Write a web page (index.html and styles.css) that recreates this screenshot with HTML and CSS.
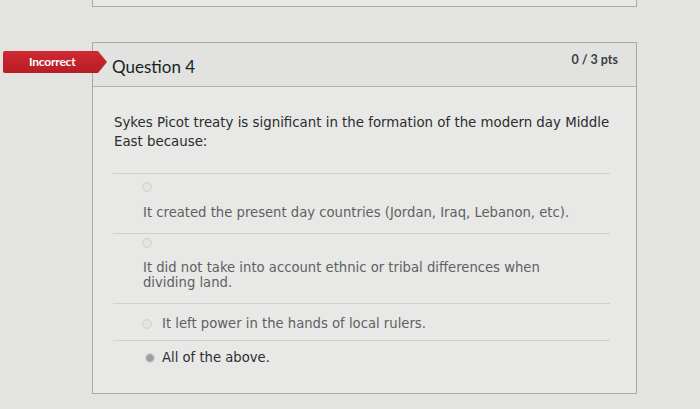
FILE: index.html
```html
<!DOCTYPE html>
<html>
<head>
<meta charset="utf-8">
<link rel="stylesheet" href="styles.css">
</head>
<body>
<div class="page">
  <div class="prev-card"></div>
  <div class="question">
    <div class="badge">Incorrect</div>
    <div class="q-header">
      <h2 class="q-title">Question 4</h2>
      <span class="q-pts">0 / 3 pts</span>
    </div>
    <div class="q-body">
      <p class="q-text">Sykes Picot treaty is significant in the formation of the modern day Middle East because:</p>
      <div class="answers">
        <div class="answer stacked">
          <span class="radio"></span>
          <div class="label">It created the present day countries (Jordan, Iraq, Lebanon, etc).</div>
        </div>
        <div class="answer stacked tight">
          <span class="radio"></span>
          <div class="label wrap">It did not take into account ethnic or tribal differences when dividing land.</div>
        </div>
        <div class="answer inline first-inline">
          <span class="radio"></span>
          <div class="label">It left power in the hands of local rulers.</div>
        </div>
        <div class="answer inline selected">
          <span class="radio"></span>
          <div class="label">All of the above.</div>
        </div>
      </div>
    </div>
  </div>
</div>
</body>
</html>
```

FILE: styles.css
```css
* { box-sizing: border-box; }
html, body { margin: 0; padding: 0; }
body {
  width: 700px;
  height: 409px;
  overflow: hidden;
  background: #e3e4e2;
  font-family: "DejaVu Sans", Verdana, sans-serif;
}
.page {
  padding-left: 92px;
}
.prev-card {
  width: 545px;
  height: 7px;
  border: 1px solid #a9aaa9;
  border-top: none;
  background: #e8e8e6;
}
.question {
  position: relative;
  margin-top: 35px;
  width: 545px;
  height: 352px;
  border: 1px solid #a7a8a7;
  background: #e8e8e6;
}
.badge {
  position: absolute;
  left: -90px;
  top: 8px;
  width: 104px;
  height: 22px;
  background: linear-gradient(#cf2a33, #b71d25);
  color: #fff;
  font-family: Lato, "Liberation Sans", sans-serif;
  font-weight: 700;
  font-size: 12px;
  line-height: 22px;
  padding-left: 26px;
  clip-path: polygon(0 0, 95px 0, 104px 50%, 95px 100%, 0 100%);
  border-radius: 2px;
  letter-spacing: -0.2px;
}
.q-header {
  height: 44px;
  display: flex;
  justify-content: space-between;
  align-items: flex-start;
  padding: 0 18px 0 19px;
  border-bottom: 1px solid #b2b3b2;
  background: #e2e3e1;
}
.q-title {
  margin: 0;
  padding-top: 14px;
  font-family: Lato, "Liberation Sans", sans-serif;
  font-weight: 400;
  font-size: 17px;
  line-height: 20px;
  color: #1a1f23;
}
.q-pts {
  padding-top: 9px;
  font-family: Lato, "Liberation Sans", sans-serif;
  font-weight: 700;
  font-size: 12.5px;
  line-height: 16px;
  color: #3a3f43;
}
.q-body {
  padding: 26px 20px 0 21px;
}
.q-text {
  margin: 0;
  font-size: 13.35px;
  line-height: 19px;
  color: #2a2c2d;
}
.answers {
  margin-top: 22px;
  margin-left: -1px;
  margin-right: 6px;
}
.answer {
  border-top: 1px solid #cfd0ce;
  font-size: 13.2px;
  line-height: 16px;
  color: #5e6163;
}
.answer.stacked {
  padding: 8px 0 12px 29px;
}
.answer.stacked .radio {
  display: block;
}
.answer.stacked .label {
  margin-top: 13px;
  margin-left: 1px;
}
.answer.tight {
  padding-top: 4px;
  padding-bottom: 13px;
}
.answer.tight .label {
  margin-top: 12px;
}
.label.wrap {
  width: 420px;
  line-height: 15px;
}
.answer.inline {
  display: flex;
  align-items: center;
  gap: 10px;
  padding: 9px 0 8px 29px;
}
.answer.first-inline {
  padding-top: 12px;
}
.radio {
  width: 10px;
  height: 10px;
  border-radius: 50%;
  border: 1px solid #d0d1cf;
  background: #e4e5e3;
  flex: none;
}
.answer.selected {
  color: #2c2e30;
}
.answer.selected .radio {
  margin-left: 3px;
  background: radial-gradient(circle, #9c9d9c 0 3px, #c4c5c3 4px);
  border-color: #cacbca;
}
.answer.selected .label {
  margin-left: -3px;
}
```
